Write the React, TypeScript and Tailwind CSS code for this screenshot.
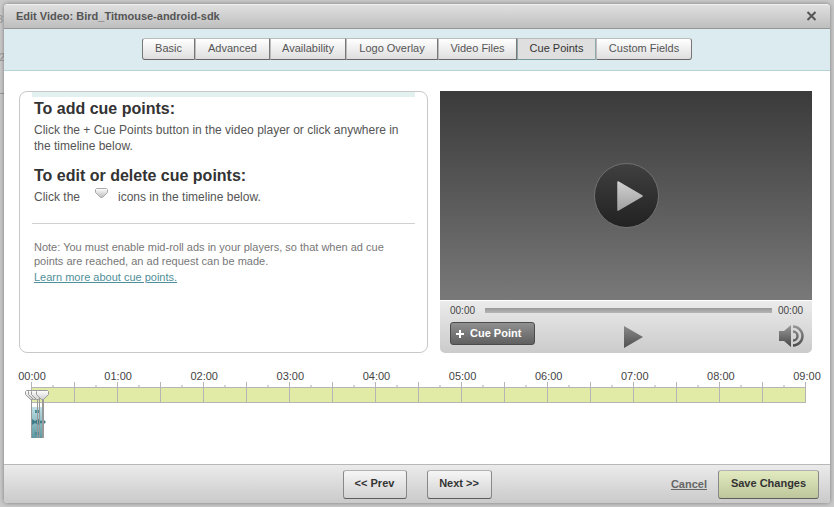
import React from "react";

const tabs = ["Basic", "Advanced", "Availability", "Logo Overlay", "Video Files", "Cue Points", "Custom Fields"];
const tabWidths = ["w-[53px]", "w-[75px]", "w-[76px]", "w-[92px]", "w-[79px]", "w-[79px]", "w-[96px]"];
const times = ["00:00", "01:00", "02:00", "03:00", "04:00", "05:00", "06:00", "07:00", "08:00", "09:00"];
const halfMinutes = Array.from({ length: 18 }, (_, i) => i);

function MarkerIcon() {
  return (
    <svg width="13" height="10" viewBox="0 0 13 10" aria-hidden="true">
      <defs>
        <linearGradient id="markerFill" x1="0" y1="0" x2="0" y2="1">
          <stop offset="0" stopColor="#ffffff" />
          <stop offset="1" stopColor="#bdbdbd" />
        </linearGradient>
      </defs>
      <path d="M1.5.5h10l1 1v3l-5 5h-2l-5-5v-3z" fill="url(#markerFill)" stroke="#aaa" />
    </svg>
  );
}

function CueMarkers() {
  return (
    <svg className="absolute left-[-6px] top-[2px]" width="25" height="49" viewBox="0 0 25 49" role="img" aria-label="Cue point markers">
      <defs>
        <linearGradient id="wave" x1="0" y1="0" x2="0" y2="1">
          <stop offset="0" stopColor="#bfe0e5" />
          <stop offset="1" stopColor="#5b97a0" />
        </linearGradient>
        <linearGradient id="cap" x1="0" y1="0" x2="0" y2="1">
          <stop offset="0" stopColor="#ffffff" />
          <stop offset="1" stopColor="#d0d0d0" />
        </linearGradient>
      </defs>
      <path d="M6 17h13v31H6z" fill="url(#wave)" />
      <path d="M10 20h4v3h-4zM10 42h4v3h-4z" fill="#4d8e98" />
      <path d="M7 29l3 2 3-2 3 2 3-1 2 2-2 2-3-1-3 2-3-2-3 2z" fill="#3f7d88" />
      <path d="M6.500 8v40M12.500 8v40M14.500 8v40" stroke="#999" />
      <path d="M18 8v40" stroke="#999" strokeWidth="2" />
      {[0, 3, 6, 11].map((x) => (
        <path key={x} transform={`translate(${x} 0)`} d="M1.500.5h10l1 1v3l-5 5h-2l-5-5v-3z" fill="url(#cap)" stroke="#999" />
      ))}
    </svg>
  );
}

function VideoPlayer() {
  return (
    <section className="flex flex-col" aria-label="Video player">
      <div className="flex h-[209px] items-center justify-center bg-linear-to-b from-[#3b3b3b] to-[#797979]">
        <button type="button" aria-label="Play video" className="flex size-[65px] items-center justify-center rounded-full border border-[#707070] bg-linear-to-b from-[#404040] to-[#222222]">
          <svg width="65" height="65" viewBox="0 0 65 65" className="shrink-0">
            <defs>
              <linearGradient id="bigPlay" x1="0" y1="0" x2="0" y2="1">
                <stop offset="0" stopColor="#d0d0d0" />
                <stop offset="1" stopColor="#a0a0a0" />
              </linearGradient>
            </defs>
            <path d="M24 19l24 14-24 14z" fill="url(#bigPlay)" stroke="url(#bigPlay)" strokeWidth="1.500" strokeLinejoin="round" />
          </svg>
        </button>
      </div>
      <div className="mt-px h-[52px] rounded-b-[5px] bg-linear-to-b from-[#ebebeb] to-[#cbcbcb] pl-[10px] pr-2">
        <div className="flex h-[18px] items-center text-[10px] text-[#444]">
          <span className="w-[35px]">00:00</span>
          <div className="h-[5px] flex-1 bg-linear-to-b from-[#999] to-[#b5b5b5]" />
          <span className="w-8 pl-[6px]">00:00</span>
        </div>
        <div className="grid grid-cols-[1fr_auto_1fr] items-center">
          <button type="button" className="mt-[3px] flex h-[23px] w-[85px] items-center gap-[6px] self-start rounded-[3px] border border-[#4c4c4c] bg-linear-to-b from-[#909090] to-[#606060] pl-[5px] text-[11px] font-bold text-white">
            <svg width="8" height="8" viewBox="0 0 8 8" aria-hidden="true">
              <path d="M4 0v8M0 4h8" stroke="#fff" strokeWidth="2" />
            </svg>
            Cue Point
          </button>
          <button type="button" aria-label="Play" className="mt-[6px] ml-3">
            <svg width="19" height="24" viewBox="0 0 19 24" className="block">
              <defs>
                <linearGradient id="play" x1="0" y1="0" x2="0" y2="1">
                  <stop offset="0" stopColor="#888" />
                  <stop offset="1" stopColor="#505050" />
                </linearGradient>
              </defs>
              <path d="M0 1l19 11L0 23z" fill="url(#play)" />
            </svg>
          </button>
          <button type="button" aria-label="Volume" className="mt-[3px] justify-self-end">
            <svg width="26" height="22" viewBox="0 0 26 22" className="block">
              <defs>
                <linearGradient id="volume" gradientUnits="userSpaceOnUse" x1="0" y1="0" x2="0" y2="22">
                  <stop offset="0" stopColor="#999" />
                  <stop offset="1" stopColor="#484848" />
                </linearGradient>
              </defs>
              <path d="M1 6h5l7-6v22l-7-6H1z" fill="url(#volume)" />
              <path d="M15 6.500a4.500 4.500 0 0 1 0 9M15 1.500a9.500 9.500 0 0 1 0 19" fill="none" stroke="url(#volume)" strokeWidth="2.500" />
            </svg>
          </button>
        </div>
      </div>
    </section>
  );
}

function Timeline() {
  return (
    <section aria-label="Timeline" className="ml-3 mr-[6px] mt-[17px]">
      <div className="flex h-3 justify-between text-[11px] leading-[13px] text-[#444]">
        {times.map((t) => (
          <div key={t} className="flex w-0 justify-center whitespace-nowrap">
            <span className="ml-[2px]">{t}</span>
          </div>
        ))}
      </div>
      <div className="relative">
        <div className="grid h-[5px] grid-cols-18 border-r border-[#b5b5b5]">
          {halfMinutes.map((i) => (
            <div key={i} className="flex items-end justify-center border-l border-[#b5b5b5]">
              <div className="size-[2px] bg-[#d5d5d5]" />
            </div>
          ))}
        </div>
        <div className="grid h-[16px] grid-cols-18 border-y border-r border-[#b5b5b5] bg-[#e1eba5]">
          {halfMinutes.map((i) => (
            <div key={i} className="border-l border-[#b5b5b5]" />
          ))}
        </div>
        <div className="absolute left-0 top-[6px]">
          <CueMarkers />
        </div>
      </div>
    </section>
  );
}

const footerButton =
  "h-[29px] rounded-[3px] border border-[#888] border-t-[#b0b2b4] border-b-[#5c5c5c] pb-px text-[11px] font-bold text-[#333]";

export default function App() {
  return (
    <div className="relative flex min-h-screen flex-col overflow-hidden bg-[#c9c9c9] p-1 font-['Liberation_Sans',Arial,sans-serif]">
      <div className="absolute left-[-3px] top-[11px] text-[11px] text-[#999]">3</div>
      <div className="absolute left-[-1px] top-[49px] text-[11px] text-[#999]">2</div>
      <div className="absolute left-0 top-[93px] w-1 border-t border-dashed border-[#999]" />
      <div role="dialog" aria-labelledby="dialog-title" className="relative flex flex-1 flex-col overflow-hidden rounded-[4px] bg-white shadow-[0_0_4px_rgba(0,0,0,0.4)]">
        <header className="flex h-[25px] items-center justify-between border-b border-[#959595] border-t border-t-[#efefef] bg-linear-to-b from-[#e0e0e0] to-[#bebebe] pl-3 pr-[13px]">
          <h1 id="dialog-title" className="text-[11px] font-bold text-[#555]">Edit Video: Bird_Titmouse-android-sdk</h1>
          <button type="button" aria-label="Close">
            <svg width="11" height="10" viewBox="0 0 11 10" className="mb-[2px] block">
              <path d="M1.500 1l8 8M9.500 1l-8 8" stroke="#555" strokeWidth="2" />
            </svg>
          </button>
        </header>
        <nav className="flex h-[42px] items-start justify-center border-b border-[#b5d2d6] bg-[#dcebef] pt-[9px]">
          <div className="flex">
            {tabs.map((tab, i) => (
              <button
                key={tab}
                type="button"
                className={`${tabWidths[i]} h-[22px] border border-t-[#bbb] border-b-[#666] pb-px text-[11px] whitespace-nowrap first:rounded-l-[3px] last:rounded-r-[3px] ${
                  tab === "Cue Points"
                    ? "border-[#8fa9ac] border-t-[#96c2c7] border-b-[#79999d] bg-[#dfdfdf] text-[#333]"
                    : "border-l-[#bbb] border-r-[#777] bg-linear-to-b from-white to-[#dedede] text-[#555] first:border-l-[#777]"
                }`}
              >
                {tab}
              </button>
            ))}
          </div>
        </nav>
        <main className="flex-1 pl-[15px] pr-[18px] pt-5">
          <div className="grid grid-cols-[409fr_372fr] gap-3">
            <section className="rounded-[8px] border border-[#c8c8c8] px-3">
              <div className="h-[5px] bg-[#e3f0f0]" />
              <div className="border-b border-[#d0d0d0] px-[2px] pb-[18px] text-[12px] leading-4 text-[#555]">
                <h2 className="mt-[2px] mb-[3px] text-[16px] leading-5 font-bold text-[#333]">To add cue points:</h2>
                <p>Click the + Cue Points button in the video player or click anywhere in the timeline below.</p>
                <h2 className="mt-3 mb-[3px] text-[16px] leading-5 font-bold text-[#333]">To edit or delete cue points:</h2>
                <p className="flex">
                  Click the
                  <span className="ml-[15px] mr-[10px] -mt-px"><MarkerIcon /></span>
                  icons in the timeline below.
                </p>
              </div>
              <div className="mt-4 px-[2px] text-[11px] leading-[14px] text-[#777]">
                <p>
                  Note: You must enable mid-roll ads in your players, so that when ad cue<br />
                  points are reached, an ad request can be made.
                </p>
                <a href="#learn" className="mt-[2px] inline-block text-[#4f8f99] underline">Learn more about cue points.</a>
              </div>
            </section>
            <VideoPlayer />
          </div>
          <Timeline />
        </main>
        <footer className="grid h-[39px] grid-cols-[1fr_auto_1fr] items-center border-t border-[#b8b8b8] bg-linear-to-b from-[#ebebeb] to-[#cacaca] px-[11px]">
          <div />
          <div className="flex gap-5">
            <button type="button" className={`${footerButton} w-16 bg-linear-to-b from-[#f6f6f6] to-[#d2d2d2]`}>&lt;&lt; Prev</button>
            <button type="button" className={`${footerButton} w-[65px] bg-linear-to-b from-[#f6f6f6] to-[#d2d2d2]`}>Next &gt;&gt;</button>
          </div>
          <div className="flex items-center justify-end gap-[11px]">
            <a href="#cancel" className="text-[11px] font-bold text-[#666] underline">Cancel</a>
            <button type="button" className={`${footerButton} w-[101px] bg-linear-to-b from-[#e3eac0] to-[#bdc79b]`}>Save Changes</button>
          </div>
        </footer>
      </div>
    </div>
  );
}
